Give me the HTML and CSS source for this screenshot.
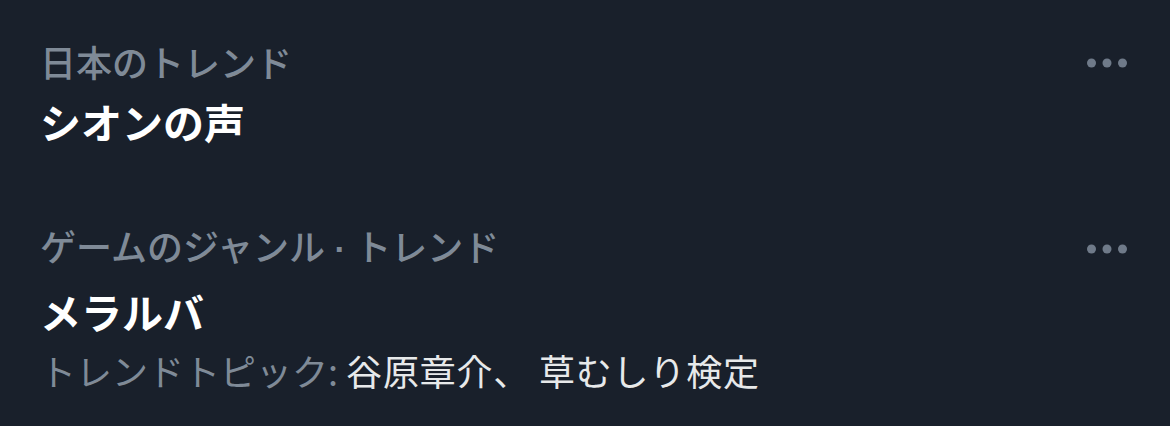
FILE: index.html
```html
<!DOCTYPE html>
<html lang="ja">
<head>
<meta charset="utf-8">
<link rel="stylesheet" href="styles.css">
</head>
<body>
<div class="list">
  <div class="trend trend-first">
    <div class="row">
      <span class="label">日本のトレンド</span>
      <svg class="more" width="40" height="10" viewBox="0 0 40 10"><circle cx="4.5" cy="5" r="4.5"/><circle cx="20" cy="5" r="4.5"/><circle cx="35.5" cy="5" r="4.5"/></svg>
    </div>
    <div class="title title-first">シオンの声</div>
  </div>
  <div class="trend trend-second">
    <div class="row">
      <span class="label">ゲームのジャンル<span class="sep"> · </span>トレンド</span>
      <svg class="more" width="40" height="10" viewBox="0 0 40 10"><circle cx="4.5" cy="5" r="4.5"/><circle cx="20" cy="5" r="4.5"/><circle cx="35.5" cy="5" r="4.5"/></svg>
    </div>
    <div class="title title-second">メラルバ</div>
    <div class="sub"><span class="sub-label">トレンドトピック: </span><span class="topics">谷原章介、 草むしり検定</span></div>
  </div>
</div>
</body>
</html>
```
FILE: styles.css
```css
html, body {
  margin: 0;
  padding: 0;
  background: #19202b;
}
body {
  width: 1170px;
  height: 426px;
  overflow: hidden;
  font-family: "Noto Sans CJK JP", "Noto Sans", sans-serif;
}
.list {
  display: flex;
  flex-direction: column;
  padding: 0 43px 0 40px;
}
.trend {
  display: flex;
  flex-direction: column;
}
.trend-first {
  padding-top: 39px;
}
.trend-second {
  padding-top: 80px;
}
.row {
  display: flex;
  align-items: center;
  justify-content: space-between;
  height: 44px;
}
.label {
  font-size: 36px;
  line-height: 44px;
  font-weight: 500;
  color: #7f8a97;
  white-space: nowrap;
}
.sep {
  font-family: "Liberation Sans", sans-serif;
  font-size: 34px;
  font-weight: 700;
}
.more {
  fill: #6f7a89;
  display: block;
  margin-top: 4px;
}
.title {
  font-size: 41px;
  line-height: 48px;
  font-weight: 700;
  color: #ffffff;
  white-space: nowrap;
}
.title-first {
  margin-top: 14px;
}
.title-second {
  margin-top: 18px;
}
.sub {
  margin-top: 11px;
  font-size: 36px;
  line-height: 48px;
  white-space: nowrap;
}
.sub-label {
  color: #7f8a97;
}
.topics {
  color: #e7e9ea;
  letter-spacing: 0.8px;
}
```
